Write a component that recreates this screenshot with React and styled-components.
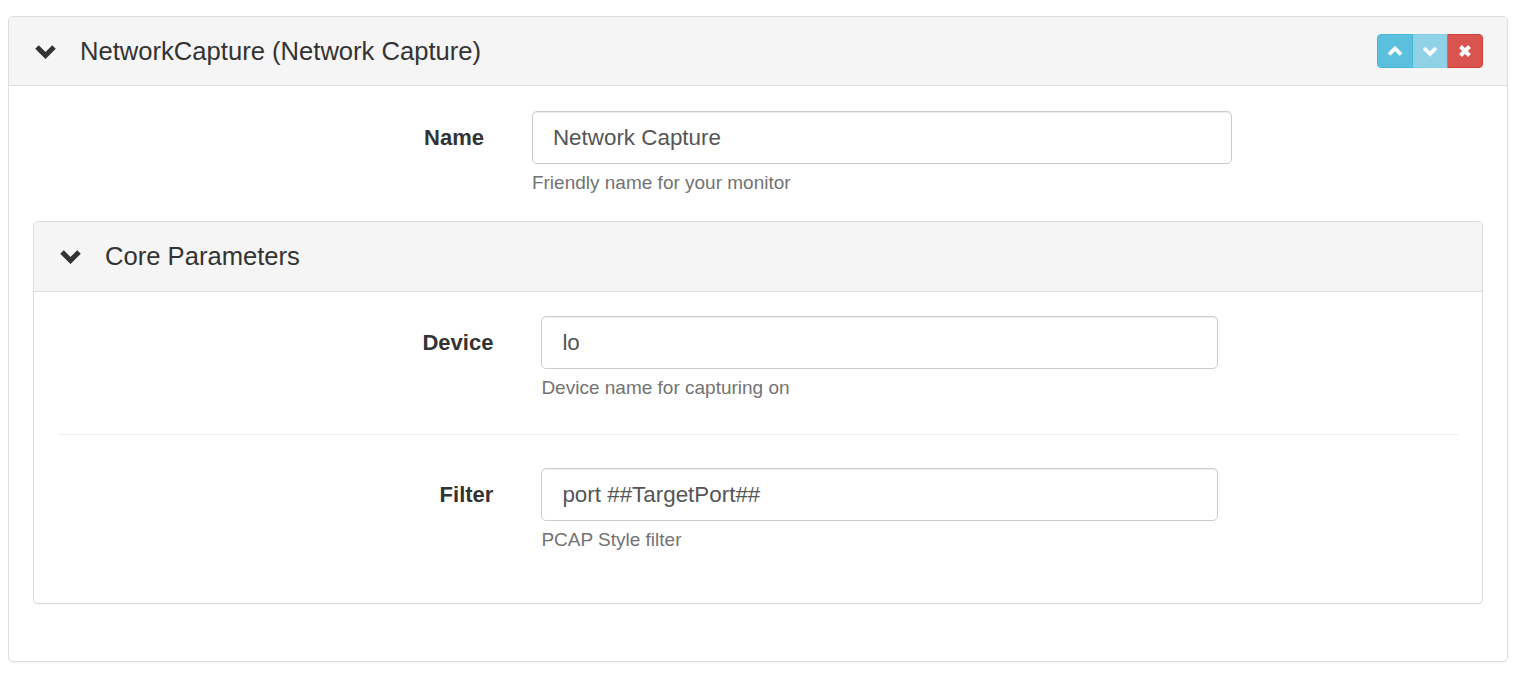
import styled, { createGlobalStyle } from 'styled-components'

const GlobalStyle = createGlobalStyle`
  html, body {
    margin: 0;
    padding: 0;
    background: #fff;
  }
  body {
    font-family: "Liberation Sans", Arial, Helvetica, sans-serif;
    color: #333;
  }
  * {
    box-sizing: border-box;
  }
`

const Page = styled.div`
  padding: 16px 12px 17px 8px;
`

const Panel = styled.div`
  background: #fff;
  border: 1px solid #ddd;
  border-radius: 5px;
  box-shadow: 0 1px 1px rgba(0, 0, 0, 0.05);
  margin-bottom: ${(p) => p.$mb || 0}px;
`

const PanelHeading = styled.div`
  display: flex;
  align-items: center;
  height: ${(p) => p.$h}px;
  padding: 0 24px 0 25px;
  background: #f5f5f5;
  border-bottom: 1px solid #ddd;
  border-radius: 4px 4px 0 0;
`

const Title = styled.div`
  flex: 1;
  display: flex;
  align-items: center;
  gap: 23px;
  font-size: 25.6px;
  color: #333;
`

const Chevron = styled.svg`
  width: 23px;
  height: 15px;
  flex: none;
`

const PanelBody = styled.div`
  padding: ${(p) => p.$pad};
`

const FormGroup = styled.div`
  display: grid;
  grid-template-columns: 31.1% 48.3%;
  column-gap: 48px;
  margin-bottom: 26px;
`

const Label = styled.label`
  display: flex;
  align-items: center;
  justify-content: flex-end;
  height: 53px;
  font-size: 22px;
  font-weight: bold;
  color: #333;
`

const Field = styled.div`
  display: flex;
  flex-direction: column;
`

const Input = styled.div`
  height: 53px;
  display: flex;
  align-items: center;
  padding: 0 20px;
  border: 1px solid #ccc;
  border-radius: 5px;
  box-shadow: inset 0 1px 1px rgba(0, 0, 0, 0.075);
  font-size: 22.4px;
  color: #555;
  background: #fff;
`

const Help = styled.div`
  margin-top: 6px;
  font-size: 19px;
  line-height: 25px;
  color: #737373;
`

const Divider = styled.hr`
  border: 0;
  border-top: 1px solid #eee;
  margin: 34px 0 33px;
`

const BtnGroup = styled.div`
  display: flex;
`

const Btn = styled.button`
  width: 36px;
  height: 34px;
  display: flex;
  align-items: center;
  justify-content: center;
  padding: 0;
  border: 1px solid ${(p) => p.$border};
  background: ${(p) => p.$bg};
  opacity: ${(p) => (p.$disabled ? 0.65 : 1)};
  margin-left: -1px;
  &:first-child {
    margin-left: 0;
    border-radius: 4px 0 0 4px;
  }
  &:last-child {
    border-radius: 0 4px 4px 0;
  }
  svg {
    width: 18px;
    height: 18px;
  }
`

const ChevronDown = ({ color = '#333', ...props }) => (
  <svg viewBox="0 0 23 15" {...props}>
    <polyline points="3,3 11.5,11.5 20,3" fill="none" stroke={color} strokeWidth="5" strokeLinejoin="miter" />
  </svg>
)

const Icon = ({ kind }) => {
  if (kind === 'up') {
    return (
      <svg viewBox="0 0 18 18">
        <polyline points="3,12.5 9,6.5 15,12.5" fill="none" stroke="#fff" strokeWidth="3.8" />
      </svg>
    )
  }
  if (kind === 'down') {
    return (
      <svg viewBox="0 0 18 18">
        <polyline points="3,6 9,12 15,6" fill="none" stroke="#fff" strokeWidth="3.8" />
      </svg>
    )
  }
  return (
    <svg viewBox="0 0 18 18">
      <path d="M4.5 4.5 L13.5 13.5 M13.5 4.5 L4.5 13.5" stroke="#fff" strokeWidth="4" />
    </svg>
  )
}

const Row = ({ label, value, help }) => (
  <FormGroup>
    <Label>{label}</Label>
    <Field>
      <Input>{value}</Input>
      <Help>{help}</Help>
    </Field>
  </FormGroup>
)

const App = () => {
  return (
    <>
      <GlobalStyle />
      <Page>
        <Panel>
          <PanelHeading $h={69}>
            <Title>
              <Chevron as={ChevronDown} />
              NetworkCapture (Network Capture)
            </Title>
            <BtnGroup>
              <Btn $bg="#5bc0de" $border="#46b8da"><Icon kind="up" /></Btn>
              <Btn $bg="#5bc0de" $border="#46b8da" $disabled><Icon kind="down" /></Btn>
              <Btn $bg="#d9534f" $border="#d43f3a"><Icon kind="close" /></Btn>
            </BtnGroup>
          </PanelHeading>
          <PanelBody $pad="25px 24px 25px 24px">
            <Row label="Name" value="Network Capture" help="Friendly name for your monitor" />
            <Panel $mb={32}>
              <PanelHeading $h={70}>
                <Title>
                  <Chevron as={ChevronDown} />
                  Core Parameters
                </Title>
              </PanelHeading>
              <PanelBody $pad="24px 24px 25px 24px">
                <Row label="Device" value="lo" help="Device name for capturing on" />
                <Divider />
                <Row label="Filter" value="port ##TargetPort##" help="PCAP Style filter" />
              </PanelBody>
            </Panel>
          </PanelBody>
        </Panel>
      </Page>
    </>
  )
}

export default App
